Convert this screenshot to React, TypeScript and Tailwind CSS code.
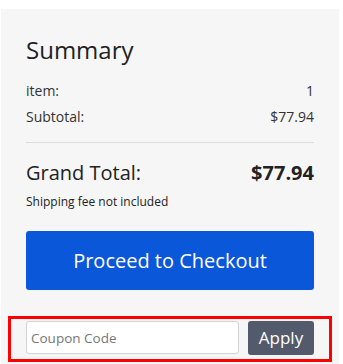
export default function App() {
  return (
    <div className="min-h-[364px] bg-white pt-[9px] pl-px pr-[4px] font-['Open_Sans',sans-serif] text-[#333]">
      <div className="bg-[#f6f6f6] px-[25px] pt-[23px] pb-[10px] min-h-[355px]">
        <h2 className="text-[24px] leading-[36px] text-[#222]">Summary</h2>
        <div className="mt-[13px] flex flex-col gap-[6px] text-[14px] leading-[20px] text-[#333]">
          <div className="flex justify-between">
            <span>item:</span>
            <span>1</span>
          </div>
          <div className="flex justify-between">
            <span>Subtotal:</span>
            <span>$77.94</span>
          </div>
        </div>
        <div className="mt-[15px] border-t border-[#dcdcdc]" />
        <div className="mt-[16px] flex justify-between items-center text-[20px] leading-[28px] text-[#222]">
          <span>Grand Total:</span>
          <span className="font-bold">$77.94</span>
        </div>
        <p className="mt-[7px] text-[12px] leading-[16px] text-[#222]">Shipping fee not included</p>
        <button className="mt-[21px] w-full h-[59px] rounded-[3px] bg-[#0b57d9] text-white text-[20px]">
          Proceed to Checkout
        </button>
        <div className="mt-[26px] -mx-[18px] border-[3px] border-[#f00] px-[15px] pt-[2px] pb-[4px] flex gap-[9px]">
          <input
            className="flex-1 min-w-0 h-[33px] rounded-[3px] border border-[#d4d4d4] bg-white px-[4px] text-[13.5px] text-[#333] placeholder:text-[#777] outline-none"
            placeholder="Coupon Code"
          />
          <button className="w-[66px] h-[34px] rounded-[3px] bg-[#525a6c] text-white text-[17px]">Apply</button>
        </div>
      </div>
    </div>
  );
}
